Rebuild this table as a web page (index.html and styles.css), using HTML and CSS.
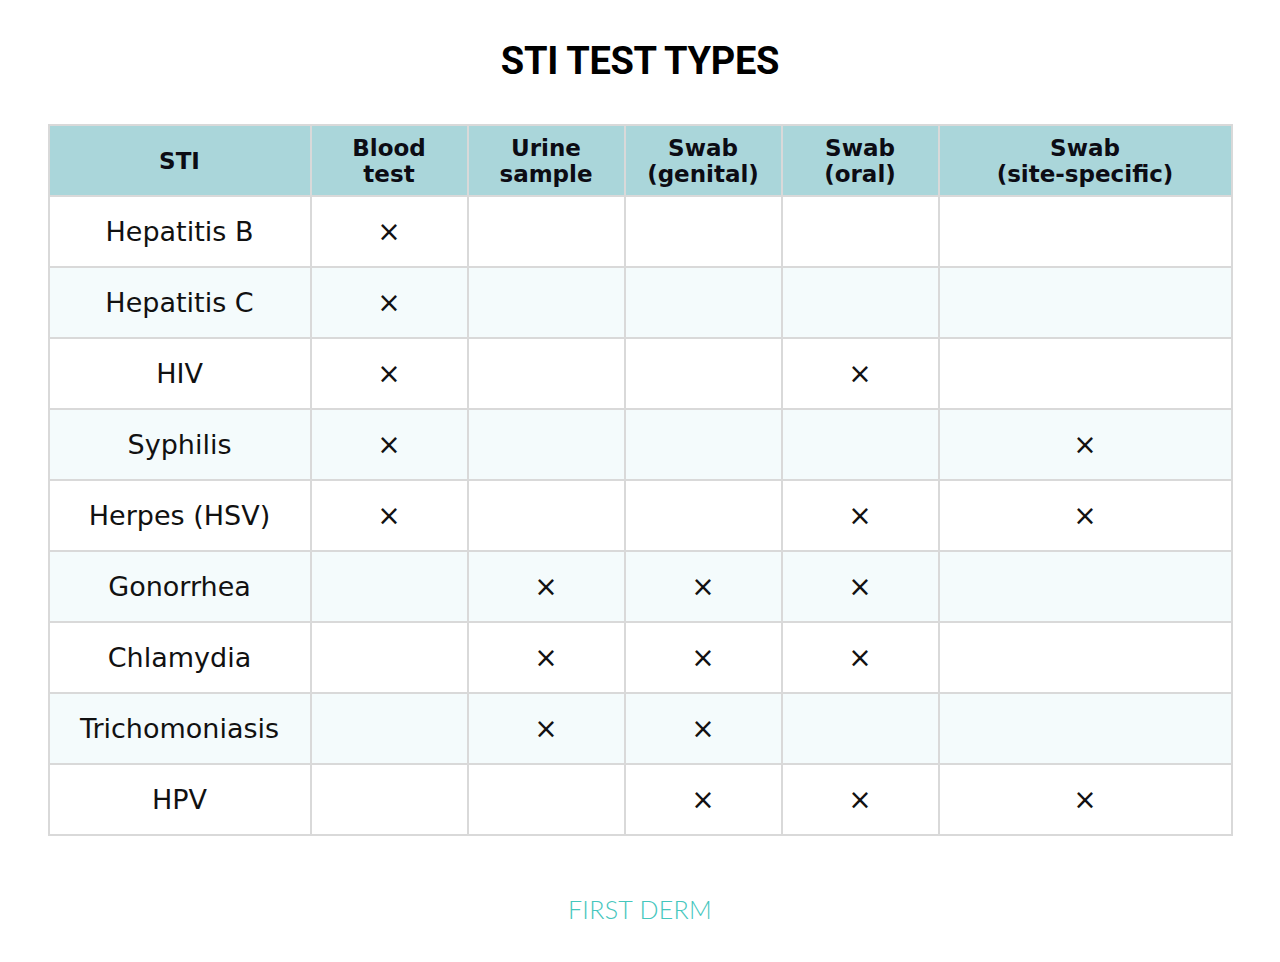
FILE: index.html
```html
<!DOCTYPE html>
<html>
<head>
<meta charset="utf-8">
<link rel="stylesheet" href="styles.css">
</head>
<body>
<div class="page">
  <h1 class="title">STI TEST TYPES</h1>
  <table class="grid">
    <colgroup>
      <col class="c-name"><col class="c-mid"><col class="c-mid"><col class="c-mid"><col class="c-mid"><col class="c-last">
    </colgroup>
    <thead>
      <tr>
        <th>STI</th>
        <th>Blood<br>test</th>
        <th>Urine<br>sample</th>
        <th>Swab<br>(genital)</th>
        <th>Swab<br>(oral)</th>
        <th>Swab<br>(site-specific)</th>
      </tr>
    </thead>
    <tbody>
      <tr><td>Hepatitis B</td><td class="x">×</td><td></td><td></td><td></td><td></td></tr>
      <tr><td>Hepatitis C</td><td class="x">×</td><td></td><td></td><td></td><td></td></tr>
      <tr><td>HIV</td><td class="x">×</td><td></td><td></td><td class="x">×</td><td></td></tr>
      <tr><td>Syphilis</td><td class="x">×</td><td></td><td></td><td></td><td class="x">×</td></tr>
      <tr><td>Herpes (HSV)</td><td class="x">×</td><td></td><td></td><td class="x">×</td><td class="x">×</td></tr>
      <tr><td>Gonorrhea</td><td></td><td class="x">×</td><td class="x">×</td><td class="x">×</td><td></td></tr>
      <tr><td>Chlamydia</td><td></td><td class="x">×</td><td class="x">×</td><td class="x">×</td><td></td></tr>
      <tr><td>Trichomoniasis</td><td></td><td class="x">×</td><td class="x">×</td><td></td><td></td></tr>
      <tr><td>HPV</td><td></td><td></td><td class="x">×</td><td class="x">×</td><td class="x">×</td></tr>
    </tbody>
  </table>
  <div class="brand">FIRST DERM</div>
</div>
</body>
</html>
```

FILE: styles.css
```css
html, body {
  margin: 0;
  padding: 0;
  background: #ffffff;
}
.page {
  width: 1280px;
  height: 962px;
  display: flex;
  flex-direction: column;
  align-items: center;
}
.title {
  margin: 38px 0 0 0;
  font-family: Roboto, "Liberation Sans", sans-serif;
  font-weight: 700;
  font-size: 38px;
  line-height: 46px;
  color: #000;
  letter-spacing: -0.3px;
}
.grid {
  margin-top: 40px;
  width: 1184px;
  border-collapse: collapse;
  table-layout: fixed;
  font-family: "DejaVu Sans", sans-serif;
  color: #111;
}
.c-name { width: 262px; }
.c-mid { width: 157px; }
.c-last { width: 293px; }
.grid th, .grid td {
  border: 2px solid #d9d9d9;
  text-align: center;
  vertical-align: middle;
  padding: 0;
}
.grid th {
  background: #aad6da;
  height: 69px;
  font-size: 23px;
  font-weight: 700;
  line-height: 26px;
  color: #0c0c14;
}
.grid td {
  height: 69px;
  font-size: 27px;
  line-height: 30px;
}
.grid tbody tr:nth-child(even) td {
  background: #f4fbfc;
}
.grid td.x {
  font-size: 28px;
}
.brand {
  margin-top: 58px;
  font-family: Lato, "Open Sans", sans-serif;
  font-weight: 300;
  font-size: 25px;
  color: #45c6bd;
  letter-spacing: 0.3px;
}
```
